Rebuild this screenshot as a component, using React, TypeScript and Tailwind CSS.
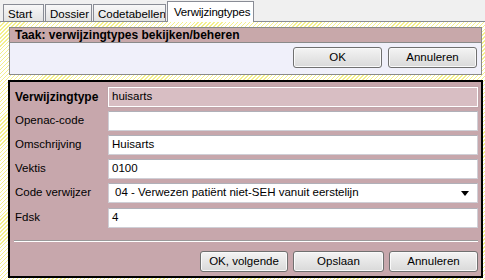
import React from 'react';

const tabs = [
    { label: 'Start', w: 'w-[41px]' },
    { label: 'Dossier', w: 'w-[47px]' },
    { label: 'Codetabellen', w: 'w-[73px]' },
];

const Btn: React.FC<{ label: string; w: string }> = ({ label, w }) => (
    <button
        className={`${w} h-[21px] rounded-[3px] border border-[#707070] bg-linear-to-b from-[#f4f4f4] to-[#d9d9d9] text-[11.5px] text-black leading-none shadow-[inset_0_0_0_1px_#fafafa]`}
    >
        {label}
    </button>
);

const Field: React.FC<{ label: string; value?: string; bold?: boolean; readOnly?: boolean; select?: boolean }> = ({
    label,
    value,
    bold,
    readOnly,
    select,
}) => (
    <div className="flex items-center h-[20px]">
        <div className={`w-[98px] pl-[5px] ${bold ? 'font-bold text-[12px]' : 'text-[11.5px]'} text-black`}>{label}</div>
        <div
            className={`flex-1 h-[20px] flex items-center ${select ? 'pl-[6px]' : 'pl-[3px]'} pr-[8px] border ${
                readOnly
                    ? 'bg-[#d8bec3] border-white shadow-[0_0_0_1px_#c0a4a9]'
                    : 'bg-white border-[#cfcfd6] border-t-[#b0b0b8]'
            } text-[11.5px] text-black`}
        >
            <span className="flex-1">{value}</span>
            {select && (
                <svg width="8" height="5" viewBox="0 0 8 5">
                    <path d="M0 0h8L4 5z" fill="#000" />
                </svg>
            )}
        </div>
    </div>
);

export default function App() {
    return (
        <div className="w-[485px] h-[280px] overflow-hidden bg-[#f0f0f0] font-['Liberation_Sans',Arial,sans-serif] text-[11px] text-black">
            {/* tab strip */}
            <div className="flex items-end h-[22px] pl-[3px] border-b border-[#898c95]">
                {tabs.map((t) => (
                    <div
                        key={t.label}
                        className={`${t.w} shrink-0 h-[17px] mr-[1px] pl-[4px] pt-[2px] border border-b-0 border-[#898c95] bg-linear-to-b from-[#f8f8f8] to-[#e2e2e2] text-[11.5px] leading-[14px] whitespace-nowrap overflow-hidden`}
                    >
                        {t.label}
                    </div>
                ))}
                <div className="w-[87px] shrink-0 h-[21px] -mb-[1px] pl-[6px] pt-[3px] border border-b-0 border-[#898c95] bg-white text-[11.5px] tracking-[-0.2px] leading-[14px] whitespace-nowrap relative z-10">
                    Verwijzingtypes
                </div>
            </div>

            {/* hatched content area */}
            <div className="h-[258px] pl-[8px] pr-[2px] pt-[5px] bg-[image:repeating-linear-gradient(135deg,#f4f08c_0px,#f4f08c_0.9px,#ffffff_0.9px,#ffffff_2.8px)]">
                {/* task panel */}
                <div className="border border-[#8a8a8a] ml-[1px] mr-[1px]">
                    <div className="h-[15px] bg-[#c8a8aa] border-b border-[#8a8a8a] pl-[5px] font-bold text-[12px] leading-[15px]">
                        Taak: verwijzingtypes bekijken/beheren
                    </div>
                    <div className="h-[31px] bg-[#f0f0fa] flex justify-end items-start gap-[6px] pt-[4px] pr-[4px]">
                        <Btn label="OK" w="w-[89px]" />
                        <Btn label="Annuleren" w="w-[89px]" />
                    </div>
                </div>

                {/* detail panel */}
                <div className="mt-[5px] h-[198px] border-2 border-black bg-[#c7a7ac] pt-[5px] pr-[3px]">
                    <div className="flex flex-col gap-[4px]">
                        <Field label="Verwijzingtype" value="huisarts" bold readOnly />
                        <Field label="Openac-code" value="" />
                        <Field label="Omschrijving" value="Huisarts" />
                        <Field label="Vektis" value="0100" />
                        <Field label="Code verwijzer" value="04 - Verwezen patiënt niet-SEH vanuit eerstelijn" select />
                        <div className="mt-[1px]">
                            <Field label="Fdsk" value="4" />
                        </div>
                    </div>
                    <div className="ml-[4px] mt-[12px] h-[2px] border-t border-[#9a9a9a] bg-white" />
                    <div className="flex justify-end gap-[5px] mt-[9px]">
                        <Btn label="OK, volgende" w="w-[88px]" />
                        <Btn label="Opslaan" w="w-[91px]" />
                        <Btn label="Annuleren" w="w-[89px]" />
                    </div>
                </div>
            </div>
        </div>
    );
}
